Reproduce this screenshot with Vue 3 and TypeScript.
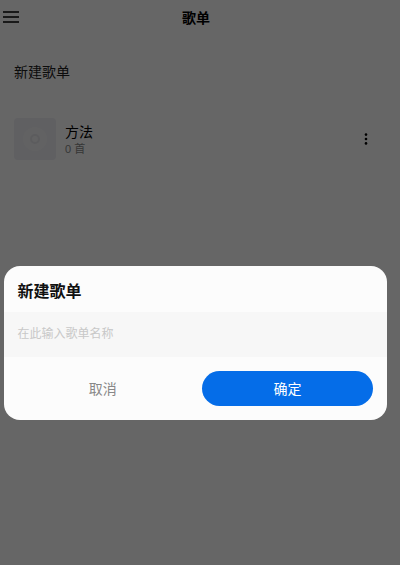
<script setup lang="ts">
const title = '歌单'
const lists = [{ name: '方法', count: '0 首' }]
</script>

<template>
  <div class="page">
    <header class="bar">
      <svg class="menu" width="16" height="12" viewBox="0 0 16 12" aria-hidden="true">
        <path d="M0 1h16M0 6h16M0 11h16" stroke="#000" stroke-width="1.7" fill="none" />
      </svg>
      <h1 class="title">{{ title }}</h1>
    </header>
    <div class="create">新建歌单</div>
    <ul class="list">
      <li v-for="l in lists" :key="l.name" class="row">
        <div class="cover">
          <svg width="26" height="26" viewBox="0 0 26 26" aria-hidden="true">
            <circle cx="13" cy="13" r="12" fill="#f5f5f7" />
            <circle cx="13" cy="13" r="4" fill="none" stroke="#e6e6ea" stroke-width="2" />
          </svg>
        </div>
        <div class="info">
          <div class="name">{{ l.name }}</div>
          <div class="count">{{ l.count }}</div>
        </div>
        <svg class="more" width="4" height="12" viewBox="0 0 4 12" aria-hidden="true">
          <circle cx="2" cy="1.6" r="1.3" />
          <circle cx="2" cy="6" r="1.3" />
          <circle cx="2" cy="10.4" r="1.3" />
        </svg>
      </li>
    </ul>

    <div class="mask">
      <div class="dialog">
        <div class="d-title">新建歌单</div>
        <div class="field">在此输入歌单名称</div>
        <div class="actions">
          <button class="btn cancel" type="button">取消</button>
          <button class="btn ok" type="button">确定</button>
        </div>
      </div>
    </div>
  </div>
</template>

<style>
html, body { margin: 0; background: #fff; }
</style>

<style scoped>
.page {
  position: relative;
  width: 400px;
  height: 565px;
  overflow: hidden;
  background: #fff;
  font-family: "Liberation Sans", "Noto Sans CJK SC", sans-serif;
  color: #000;
}
.bar {
  position: relative;
  height: 34px;
  display: flex;
  align-items: center;
  justify-content: center;
}
.menu { position: absolute; left: 3px; top: 11px; }
.title { margin: 0 0 0 -8px; font-size: 14px; font-weight: 700; }
.create {
  margin-top: 19px;
  padding-left: 14px;
  font-size: 14px;
  line-height: 38px;
  color: #222;
}
.list { list-style: none; margin: 27px 0 0; padding: 0 32px 0 14px; }
.row { display: flex; align-items: center; height: 42px; }
.cover {
  width: 42px;
  height: 42px;
  border-radius: 4px;
  background: #f0f0f6;
  display: flex;
  align-items: center;
  justify-content: center;
}
.info { flex: 1; margin-left: 9px; }
.name { font-size: 14px; line-height: 18px; color: #000; margin-top: 2px; }
.count { font-size: 11px; line-height: 15px; padding-top: 1px; color: #888; }
.more { fill: #000; margin-top: -1px; }
.mask {
  position: absolute;
  inset: 0;
  background: rgba(0, 0, 0, 0.6);
}
.dialog {
  position: absolute;
  left: 3.5px;
  top: 266px;
  width: 383.5px;
  height: 154px;
  box-sizing: border-box;
  border-radius: 16px;
  background: #fcfcfc;
  overflow: hidden;
}
.d-title {
  height: 46px;
  padding-left: 14px;
  font-size: 16px;
  line-height: 51px;
  font-weight: 700;
  color: #111;
}
.field {
  height: 45px;
  padding-left: 14px;
  background: #f7f7f7;
  font-size: 12px;
  line-height: 45px;
  color: #c8c8c8;
}
.actions {
  display: flex;
  justify-content: space-between;
  padding: 14px 14px 0 0;
}
.btn {
  height: 35px;
  border: 0;
  padding: 0 0 2px;
  font-family: inherit;
  font-size: 14px;
  background: none;
}
.cancel { width: 199px; color: #888; }
.ok { width: 171px; border-radius: 18px; background: #056de8; color: #fff; }
</style>
